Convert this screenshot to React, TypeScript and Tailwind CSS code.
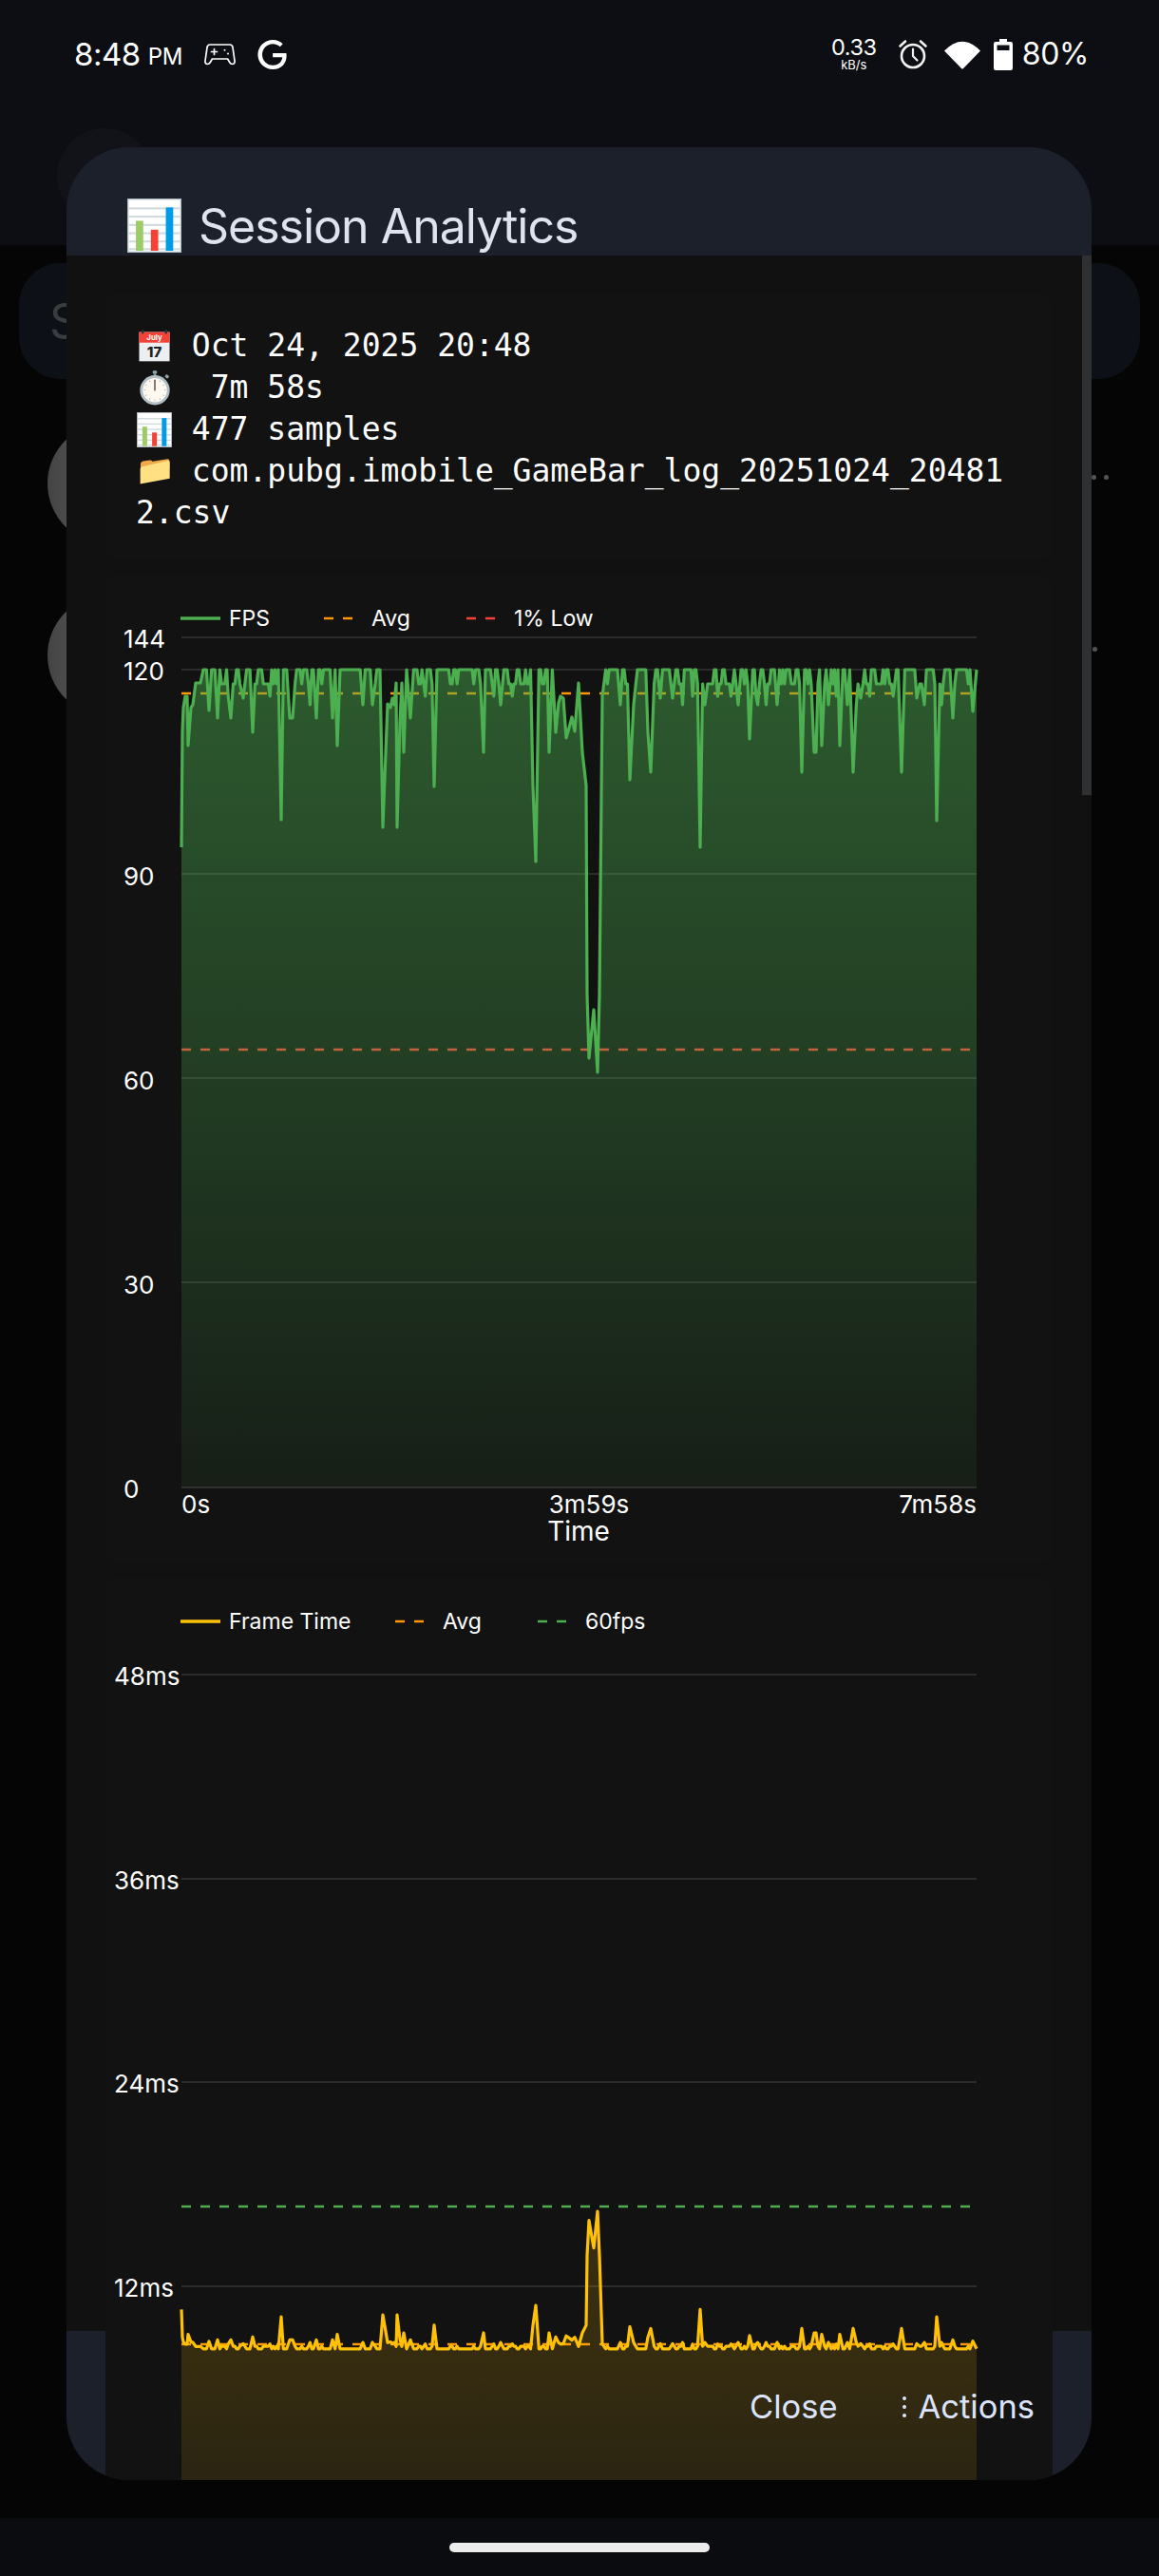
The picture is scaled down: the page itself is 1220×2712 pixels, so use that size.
import React from "react";
import { SiGoogle } from "react-icons/si";

const PX0 = 191;
const PX1 = 1028;
const COUNT = 477;

const HARD: [number, number][] = [
  [400, 428],
  [588, 634],
  [191, 214],
];

const KEY: [number, number][] = [
  [191, 892], [192, 770], [193, 745], [195, 733], [197, 733], [198, 785], [201, 745], [203, 742], [206, 719], [211, 719], [214, 705],
  [220, 748], [229, 756], [243, 756], [256, 735], [266, 771], [296, 863], [305, 756], [308, 756], [333, 756], [350, 756], [355, 785], [382, 742], [392, 742],
  [400, 705], [403, 871], [408, 741], [411, 745], [413, 735], [415, 742], [417, 719], [418, 871], [421, 760], [423, 719], [425, 792], [428, 705],
  [432, 756], [457, 828], [509, 792], [527, 742], [561, 828], [564, 907], [578, 792], [585, 771],
  [588, 740], [590, 733], [593, 735], [596, 777], [598, 770], [602, 755], [605, 770], [609, 719], [613, 792], [617, 827], [618, 1047], [620, 1114], [625, 1063], [629, 1129], [631, 1047], [634, 733],
  [653, 742], [663, 821], [667, 742], [682, 771], [685, 813], [695, 735], [708, 735], [737, 892], [742, 742], [777, 742], [789, 778], [818, 742], [833, 720], [844, 813], [857, 792], [859, 792], [865, 785], [872, 742], [884, 785], [892, 742], [898, 813], [906, 735], [949, 813], [965, 735], [973, 742], [986, 864], [1003, 756], [1024, 749], [1028, 705],
];

function buildPoints(): [number, number][] {
  let seed = 12345;
  const rnd = () => {
    seed = (seed * 1664525 + 1013904223) >>> 0;
    return seed / 4294967296;
  };
  const step = (PX1 - PX0) / (COUNT - 1);
  const pts: [number, number][] = [];
  let prev = 705;
  for (let i = 0; i < COUNT; i++) {
    const x = PX0 + i * step;
    const u = rnd();
    let y = u < 0.5 ? 705 : u < 0.9 ? 720 : u < 0.97 ? 733 : 742;
    if (prev === 705 && rnd() < 0.45) y = 705;
    prev = y;
    if (HARD.some(([a, b]) => x >= a && x <= b)) continue;
    if (KEY.some(([k]) => Math.abs(k - x) < 1.9)) continue;
    pts.push([x, y]);
  }
  return [...pts, ...KEY].sort((a, b) => a[0] - b[0]);
}

const POINTS = buildPoints();
const toPath = (p: [number, number][]) => p.map(([x, y], i) => `${i ? "L" : "M"}${x.toFixed(1)} ${y.toFixed(1)}`).join(" ");

const FPS_LINE = toPath(POINTS);
const FPS_AREA = `${FPS_LINE} L${PX1} 1566 L${PX0} 1566 Z`;
const FT_POINTS = POINTS.map(([x, y]): [number, number] => {
  const fps = (1566 - y) / 7.17;
  return [x, 2622 - (1000 / fps) * 17.92];
});
const FT_LINE = toPath(FT_POINTS);
const FT_AREA = `${FT_LINE} L${PX1} 2700 L${PX0} 2700 Z`;

const CHART_FONT = { fontFamily: "Inter, sans-serif" };

function BarChartEmoji({ className }: { className: string }) {
  return (
    <svg viewBox="0 0 170 170" className={className}>
      <rect x="2" y="2" width="166" height="166" fill="#fff" stroke="#b0bec5" strokeWidth="4" />
      {[28, 54, 80, 106, 132, 156].map((y) => (
        <rect key={y} x="4" y={y} width="162" height="6" fill="#cfd8dc" />
      ))}
      <rect x="27" y="70" width="23" height="94" fill="#9ccc65" />
      <rect x="74" y="98" width="23" height="66" fill="#f44336" />
      <rect x="121" y="28" width="23" height="136" fill="#039be5" />
    </svg>
  );
}

function CalendarEmoji() {
  return (
    <svg viewBox="0 0 100 104" className="h-[34px] w-[33px]">
      <rect x="1" y="8" width="98" height="94" fill="#eceff1" />
      <rect x="1" y="8" width="98" height="34" fill="#f44336" />
      <rect x="9" y="0" width="7" height="14" rx="3" fill="#263238" />
      <rect x="84" y="0" width="7" height="14" rx="3" fill="#263238" />
      <text x="50" y="33" textAnchor="middle" fontSize="24" fontWeight="700" fill="#fff" style={{ fontFamily: "Inter, sans-serif" }}>July</text>
      <text x="50" y="90" textAnchor="middle" fontSize="46" fontWeight="800" fill="#212121" style={{ fontFamily: "Inter, sans-serif" }}>17</text>
    </svg>
  );
}

function StopwatchEmoji() {
  return (
    <svg viewBox="0 0 100 114" className="h-[37px] w-[32px]">
      <rect x="43" y="0" width="14" height="10" rx="3" fill="#90a4ae" />
      <rect x="46" y="8" width="8" height="10" fill="#78909c" />
      <rect x="84" y="14" width="12" height="10" rx="3" fill="#90a4ae" transform="rotate(40 90 19)" />
      <circle cx="50" cy="64" r="49" fill="#b0bec5" />
      <circle cx="50" cy="64" r="40" fill="#fdf8f0" />
      {Array.from({ length: 12 }, (_, i) => (
        <rect key={i} x="49" y="28" width="2" height="5" fill="#a1887f" transform={`rotate(${i * 30} 50 64)`} />
      ))}
      <rect x="48" y="30" width="4" height="36" fill="#4e342e" />
    </svg>
  );
}

function FolderEmoji() {
  return (
    <svg viewBox="0 0 100 92" className="h-[30px] w-[32px]">
      <path d="M3 22 Q3 14 11 13 L32 10 Q38 9 42 14 L92 6 Q98 6 98 12 L98 40 L3 60 Z" fill="#f2a94a" />
      <path d="M2 88 L2 38 Q2 32 9 31 L92 12 Q99 11 99 18 L99 70 Z" fill="#ffe082" />
    </svg>
  );
}

function Gamepad() {
  return (
    <svg viewBox="0 0 33 24" className="h-[24px] w-[33px]" fill="none" stroke="#fff" strokeWidth="1.7" strokeLinejoin="round" strokeLinecap="round">
      <path d="M6 2 H27 Q29.5 2 30 5 L32 19 Q32.4 22.4 29.6 22.5 Q27.8 22.5 26.8 20.8 L24.6 17 H8.4 L6.2 20.8 Q5.2 22.5 3.4 22.5 Q.6 22.4 1 19 L3 5 Q3.5 2 6 2 Z" />
      <path d="M7.5 9.5 H13.5 M10.5 6.5 V12.5" />
      <circle cx="21.5" cy="7.8" r="1" fill="#fff" stroke="none" />
      <circle cx="25" cy="11.5" r="1" fill="#fff" stroke="none" />
    </svg>
  );
}

function AlarmIcon() {
  return (
    <svg viewBox="0 0 32 32" className="h-[32px] w-[32px]" fill="none" stroke="#f2f2f2" strokeWidth="2.6" strokeLinecap="round" strokeLinejoin="round">
      <circle cx="16" cy="18" r="12" />
      <path d="M16 10.5 V18 L20.5 22.5" strokeWidth="2.2" />
      <path d="M2.5 7.5 L8 2.5 M29.5 7.5 L24 2.5" />
    </svg>
  );
}

function WifiIcon() {
  return (
    <svg viewBox="0 0 38 31" className="h-[31px] w-[38px]">
      <path d="M0 11.5 Q19 -8 38 11.5 L20 30 Q19 31 18 30 Z" fill="#fff" />
    </svg>
  );
}

function BatteryIcon() {
  return (
    <svg viewBox="0 0 20 33" className="h-[33px] w-[20px]">
      <path d="M6 0 H14 V3 H18 Q20 3 20 5 V31 Q20 33 18 33 H2 Q0 33 0 31 V5 Q0 3 2 3 H6 Z" fill="#fff" />
      <rect x="3.5" y="6.5" width="13" height="5.5" fill="#0c0e13" />
    </svg>
  );
}

function StatusBar() {
  return (
    <div className="relative flex h-[258px] shrink-0 items-start justify-between bg-[#0c0e13] pl-[78px] pr-[74px] pt-[38px] text-white [font-family:Inter,sans-serif]">
      <div className="absolute left-[60px] top-[135px] h-[100px] w-[100px] rounded-full bg-[#111318]" />
      <div className="flex h-[38px] items-center">
        <span className="text-[33px] leading-[38px] tracking-[-0.5px]">8:48</span>
        <span className="ml-[8px] mt-[5px] text-[24px] leading-[28px] tracking-[-0.2px]">PM</span>
        <span className="ml-[23px] flex"><Gamepad /></span>
        <span className="ml-[23px] flex"><SiGoogle size={31} color="#fff" /></span>
      </div>
      <div className="flex h-[38px] items-center">
        <div className="flex w-[50px] flex-col items-center">
          <span className="text-[23.5px] leading-[22px] tracking-[-0.5px]">0.33</span>
          <span className="text-[13px] leading-[14px]">kB/s</span>
        </div>
        <span className="ml-[21px] flex"><AlarmIcon /></span>
        <span className="ml-[17px] flex"><WifiIcon /></span>
        <span className="ml-[14px] flex"><BatteryIcon /></span>
        <span className="ml-[10px] text-[32px] leading-[38px] tracking-[-0.4px]">80%</span>
      </div>
    </div>
  );
}

function BackgroundList() {
  return (
    <div className="flex flex-1 flex-col bg-[#050505] px-[20px] pt-[19px]">
      <div className="flex h-[122px] shrink-0 items-center rounded-[44px] bg-[#0d1117] pl-[32px] text-[50px] text-[#3a3c40] [font-family:Inter,sans-serif]">S</div>
      <div className="mt-[46px] flex h-[128px] items-center justify-between pl-[30px]">
        <div className="h-[128px] w-[128px] rounded-full bg-gradient-to-r from-[#444] to-[#777]" />
        <div className="mb-[14px] flex gap-[8px] pr-[33px]">
          <span className="h-[5px] w-[5px] rounded-full bg-[#555]" />
          <span className="h-[5px] w-[5px] rounded-full bg-[#555]" />
        </div>
      </div>
      <div className="mt-[53px] flex h-[128px] items-center justify-between pl-[30px]">
        <div className="h-[128px] w-[128px] rounded-full bg-gradient-to-r from-[#444] to-[#777]" />
        <div className="mb-[14px] flex pr-[45px]">
          <span className="h-[5px] w-[5px] rounded-full bg-[#555]" />
        </div>
      </div>
    </div>
  );
}

function EmojiBox({ children }: { children: React.ReactNode }) {
  return <span className="inline-flex h-[44px] w-[39px] items-center justify-center align-top">{children}</span>;
}

function InfoCard() {
  return (
    <div className="rounded-[12px] bg-[#121212] px-[32px] pb-[27px] pt-[33px] text-[33px] leading-[44px] text-white [font-family:'DejaVu_Sans_Mono',monospace]">
      <div className="whitespace-pre-wrap break-all"><EmojiBox><CalendarEmoji /></EmojiBox>{" Oct 24, 2025 20:48"}</div>
      <div className="whitespace-pre-wrap break-all"><EmojiBox><StopwatchEmoji /></EmojiBox>{"  7m 58s"}</div>
      <div className="whitespace-pre-wrap break-all"><EmojiBox><BarChartEmoji className="h-[37px] w-[37px]" /></EmojiBox>{" 477 samples"}</div>
      <div className="whitespace-pre-wrap break-all"><EmojiBox><FolderEmoji /></EmojiBox>{" com.pubg.imobile_GameBar_log_20251024_204812.csv"}</div>
    </div>
  );
}

function Grid({ ys }: { ys: number[] }) {
  return (
    <>
      {ys.map((y) => (
        <line key={y} x1={PX0} x2={PX1} y1={y} y2={y} stroke="#363636" strokeWidth="1.6" />
      ))}
    </>
  );
}

function Dash({ y, color }: { y: number; color: string }) {
  return <line x1={PX0} x2={PX1} y1={y} y2={y} stroke={color} strokeWidth="2.5" strokeDasharray="10 10" />;
}

function LegendDash({ x, y, color }: { x: number; y: number; color: string }) {
  return <line x1={x} x2={x + 30} y1={y} y2={y} stroke={color} strokeWidth="2.5" strokeDasharray="10 10" />;
}

function Label({ x, y, size = 23, anchor, children }: { x: number; y: number; size?: number; anchor?: "middle" | "end"; children: React.ReactNode }) {
  return (
    <text x={x} y={y} fill="#fff" fontSize={size} textAnchor={anchor} dominantBaseline="central" style={CHART_FONT}>
      {children}
    </text>
  );
}

function FpsChart() {
  return (
    <div className="rounded-[12px] bg-[#121212]">
      <svg viewBox="111 605 997 1040" className="block h-[1040px] w-[997px]">
        <defs>
          <linearGradient id="fpsFill" gradientUnits="userSpaceOnUse" x1="0" x2="0" y1="705" y2="1566">
            <stop offset="0" stopColor="#4caf50" stopOpacity="0.46" />
            <stop offset="1" stopColor="#4caf50" stopOpacity="0.08" />
          </linearGradient>
        </defs>
        <line x1="190" x2="232" y1="651" y2="651" stroke="#4caf50" strokeWidth="3.5" />
        <Label x={241} y={651}>FPS</Label>
        <LegendDash x={341} y={651} color="#ff9800" />
        <Label x={391} y={651}>Avg</Label>
        <LegendDash x={491} y={651} color="#f44336" />
        <Label x={541} y={651}>1% Low</Label>

        <Grid ys={[671, 705, 920, 1135, 1350, 1566]} />
        <Dash y={730} color="#ff9800" />
        <Dash y={1105} color="#f44336" />
        <path d={FPS_AREA} fill="url(#fpsFill)" />
        <path d={FPS_LINE} fill="none" stroke="#4caf50" strokeWidth="3.2" strokeLinejoin="round" />

        <Label x={130} y={672} size={26}>144</Label>
        <Label x={130} y={706} size={26}>120</Label>
        <Label x={130} y={922} size={26}>90</Label>
        <Label x={130} y={1137} size={26}>60</Label>
        <Label x={130} y={1352} size={26}>30</Label>
        <Label x={130} y={1567} size={26}>0</Label>

        <Label x={191} y={1583} size={26}>0s</Label>
        <Label x={620} y={1583} size={26} anchor="middle">3m59s</Label>
        <Label x={1028} y={1583} size={26} anchor="end">7m58s</Label>
        <Label x={609} y={1612} size={28} anchor="middle">Time</Label>
      </svg>
    </div>
  );
}

function FrameChart() {
  return (
    <div className="rounded-[12px] bg-[#121212]">
      <svg viewBox="111 1661 997 1040" className="block h-[1040px] w-[997px]">
        <defs>
          <linearGradient id="ftFill" gradientUnits="userSpaceOnUse" x1="0" x2="0" y1="2473" y2="2622">
            <stop offset="0" stopColor="#ffc107" stopOpacity="0.155" />
            <stop offset="1" stopColor="#ffc107" stopOpacity="0.1" />
          </linearGradient>
        </defs>
        <line x1="190" x2="232" y1="1707" y2="1707" stroke="#ffc107" strokeWidth="3.5" />
        <Label x={241} y={1707}>Frame Time</Label>
        <LegendDash x={416} y={1707} color="#ff9800" />
        <Label x={466} y={1707}>Avg</Label>
        <LegendDash x={566} y={1707} color="#4caf50" />
        <Label x={616} y={1707}>60fps</Label>

        <Grid ys={[1763, 1978, 2192, 2407]} />
        <Dash y={2323} color="#4caf50" />
        <Dash y={2468} color="#ff9800" />
        <path d={FT_AREA} fill="url(#ftFill)" />
        <path d={FT_LINE} fill="none" stroke="#ffc107" strokeWidth="3.2" strokeLinejoin="round" />

        <Label x={120} y={1764} size={26}>48ms</Label>
        <Label x={120} y={1979} size={26}>36ms</Label>
        <Label x={120} y={2193} size={26}>24ms</Label>
        <Label x={120} y={2408} size={26}>12ms</Label>
      </svg>
    </div>
  );
}

function Dialog() {
  return (
    <div className="absolute left-[70px] top-[155px] flex h-[2456px] w-[1079px] flex-col overflow-hidden rounded-[66px] bg-[#1b202a]">
      <div className="flex h-[114px] shrink-0 items-end pl-[64px]">
        <BarChartEmoji className="mb-[3px] h-[57px] w-[57px]" />
        <h2 className="ml-[18px] text-[50px] leading-[62px] tracking-[-1px] text-[#dfe3f0] [font-family:Inter,sans-serif]">Session Analytics</h2>
      </div>
      <div className="relative h-[2185px] shrink-0 bg-[#111111] px-[41px] pt-[40px]">
        <div className="flex flex-col gap-[16px]">
          <InfoCard />
          <FpsChart />
          <FrameChart />
        </div>
        <div className="absolute right-0 top-0 h-[568px] w-[10px] bg-[#2e3032]" />
      </div>
      <div className="relative flex flex-1 items-start justify-end pr-[60px] pt-[56px] text-[34.5px] leading-[48px] text-[#dbe4fb] [font-family:Inter,sans-serif]">
        <span>Close</span>
        <span className="ml-[68px] flex items-center">
          <span className="mr-[13px] flex flex-col gap-[5px]">
            <span className="h-[4px] w-[4px] rounded-full bg-[#dbe4fb]" />
            <span className="h-[4px] w-[4px] rounded-full bg-[#dbe4fb]" />
            <span className="h-[4px] w-[4px] rounded-full bg-[#dbe4fb]" />
          </span>
          Actions
        </span>
      </div>
    </div>
  );
}

export default function App() {
  return (
    <div className="relative flex h-[2712px] w-[1220px] flex-col overflow-hidden bg-[#050505]">
      <StatusBar />
      <BackgroundList />
      <div className="flex h-[61px] shrink-0 items-start justify-center bg-[#0a0c10] pt-[26px]">
        <div className="h-[10px] w-[274px] rounded-full bg-[#ececec]" />
      </div>
      <Dialog />
    </div>
  );
}
